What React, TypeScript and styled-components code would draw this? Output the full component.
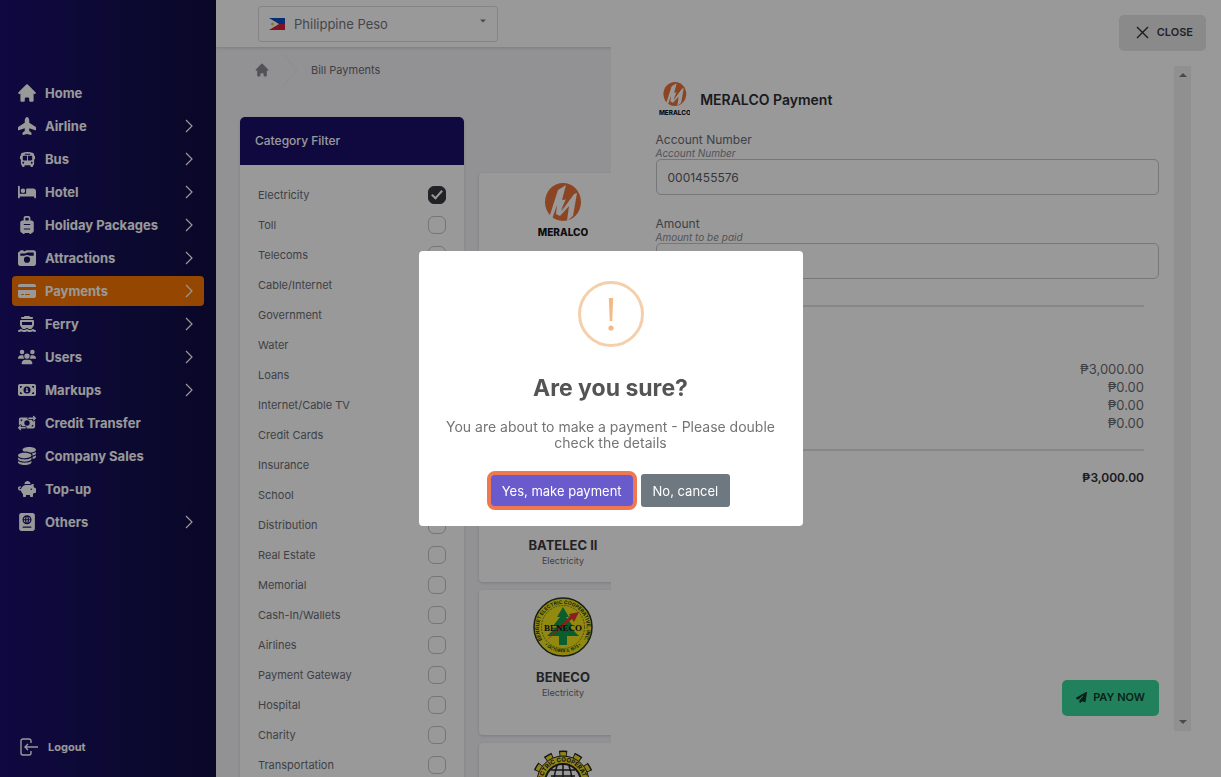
import React from "react";
import styled, { createGlobalStyle } from "styled-components";
import { HiHome } from "react-icons/hi";
import {
  FaPlaneUp, FaBus, FaBed, FaSuitcaseRolling, FaCameraRetro, FaCreditCard, FaFerry,
  FaUsers, FaMoneyBill1, FaMoneyBillTransfer, FaCoins, FaPiggyBank, FaPassport, FaPaperPlane,
} from "react-icons/fa6";

const Global = createGlobalStyle`
  *, *::before, *::after { box-sizing: border-box; }
  body { margin: 0; font-family: Inter, "Open Sans", sans-serif; font-size: 13px; color: #6a6c74; background: #f3f3f8; overflow: hidden; }
  button, input, select { font: inherit; }
  h1, h2, h3, p, ul, dl, dd { margin: 0; padding: 0; }
`;

const Page = styled.div`
  display: flex;
  height: 100vh;
  overflow: hidden;
`;

const Sidebar = styled.aside`
  flex: 0 0 216px;
  display: flex;
  flex-direction: column;
  justify-content: space-between;
  padding: 78px 12px 15px;
  background: linear-gradient(90deg, #1b0e6e 0%, #151054 55%, #110d42 100%);
`;

const Menu = styled.ul`
  display: flex;
  flex-direction: column;
  gap: 3px;
  list-style: none;
`;

const MenuLink = styled.a<{ $active?: boolean }>`
  display: flex;
  align-items: center;
  gap: 9px;
  height: 30px;
  padding: 0 11px 0 6px;
  border-radius: 4px;
  font-weight: 700;
  color: #fff;
  text-decoration: none;
  background: ${(p) => (p.$active ? "#f97500" : "transparent")};
  & > span { flex: 1; }
`;

const MenuIcon = styled.i`
  display: flex;
  justify-content: center;
  width: 18px;
  & > svg { flex: none; }
`;

const LogoutLink = styled.a`
  display: flex;
  align-items: center;
  gap: 10px;
  height: 30px;
  padding-left: 8px;
  font-size: 11px;
  font-weight: 700;
  color: #fff;
  text-decoration: none;
`;

const Main = styled.main`
  flex: 1;
  min-width: 0;
`;

const Topbar = styled.header`
  height: 47px;
  padding: 6px 42px;
  background: #fff;
  box-shadow: 0 1px 3px rgba(0, 0, 0, 0.15);
`;

const CurrencyBox = styled.div`
  display: flex;
  align-items: center;
  gap: 9px;
  width: 240px;
  height: 36px;
  padding: 0 10px;
  border: 1px solid #dcdce2;
  border-radius: 3px;
`;

const CurrencySelect = styled.select`
  flex: 1;
  appearance: none;
  padding: 0;
  border: 0;
  background: transparent;
  color: #74767f;
`;

const SelectCaret = styled.span`
  display: flex;
  margin: 0 1px 6px 0;
`;

const Crumbs = styled.nav`
  display: flex;
  align-items: center;
  height: 46px;
  padding-left: 38px;
  font-size: 11px;
  & > a { display: flex; color: #8a8a92; font-size: 16px; }
  & > svg { margin: 0 13px; }
`;

const Columns = styled.div`
  display: flex;
  align-items: flex-start;
  gap: 15px;
  padding: 24px 24px 0;
`;

const FilterCard = styled.section`
  flex: 0 0 224px;
  border-radius: 5px;
  background: #fff;
  box-shadow: 0 1px 3px rgba(0, 0, 0, 0.12);
  overflow: hidden;
`;

const FilterTitle = styled.h2`
  height: 48px;
  padding: 0 15px;
  font-size: 12px;
  font-weight: 500;
  line-height: 48px;
  color: #fff;
  background: #190f6c;
`;

const FilterList = styled.div`
  padding: 15px 18px;
`;

const FilterRow = styled.label`
  display: flex;
  align-items: center;
  justify-content: space-between;
  height: 30px;
  font-size: 11px;
`;

const Check = styled.input`
  appearance: none;
  display: grid;
  place-items: center;
  width: 18px;
  height: 18px;
  margin: 0;
  border: 1px solid #c4c4ca;
  border-radius: 6px;
  &:checked { background: #3a3a40; border-color: #3a3a40; }
  &:checked::after {
    content: "";
    width: 6px;
    height: 11px;
    margin-bottom: 3px;
    border: solid #fff;
    border-width: 0 2px 2px 0;
    transform: rotate(42deg);
  }
`;

const Billers = styled.div`
  flex: 1;
  display: flex;
  flex-direction: column;
  gap: 8px;
  max-width: 168px;
  padding-top: 56px;
`;

const BillerCard = styled.article<{ $tall?: boolean }>`
  display: flex;
  flex-direction: column;
  align-items: center;
  min-height: ${(p) => (p.$tall ? "145px" : "124px")};
  padding: 7px 0 14px;
  border-radius: 4px;
  background: #fff;
  box-shadow: 0 1px 3px rgba(0, 0, 0, 0.15);
  & > svg { flex: none; }
`;

const BillerName = styled.h3`
  margin-top: 11px;
  font-size: 13px;
  line-height: 18px;
  color: #3a3a40;
`;

const BillerKind = styled.p`
  font-size: 9px;
  line-height: 14px;
`;

const Drawer = styled.section`
  position: fixed;
  inset: 0 0 0 50%;
  display: flex;
  flex-direction: column;
  padding: 15px 15px 46px 45px;
  background: #fff;
`;

const CloseButton = styled.button`
  align-self: flex-end;
  display: flex;
  align-items: center;
  gap: 8px;
  height: 36px;
  padding: 0 13px 2px 17px;
  border: 0;
  border-radius: 5px;
  font-size: 11px;
  font-weight: 600;
  color: #3a3a40;
  background: #e6e6e6;
`;

const DrawerBody = styled.div`
  flex: 1;
  display: flex;
  gap: 15px;
  margin: 15px 15px 0 0;
`;

const Form = styled.form`
  flex: 1;
  display: flex;
  flex-direction: column;
  padding: 15px 0;
`;

const FormHead = styled.div`
  display: flex;
  align-items: center;
  gap: 10px;
  height: 36px;
  margin-bottom: 15px;
  padding-left: 3px;
  & > h2 { font-size: 14px; font-weight: 600; color: #2e2e34; }
`;

const Field = styled.label`
  display: flex;
  flex-direction: column;
  margin-bottom: 21px;
  font-size: 12px;
  line-height: 16px;
  & > em { font-size: 10px; line-height: 11px; color: #8a8a92; }
`;

const TextInput = styled.input`
  width: 100%;
  height: 36px;
  padding: 0 11px;
  border: 1px solid #c4c6cc;
  border-radius: 5px;
  background: transparent;
  font-size: 12px;
  color: #5a5c66;
`;

const Rule = styled.hr`
  width: calc(100% - 15px);
  margin: 5px 15px 0 0;
  border: 0;
  border-top: 2px solid #e2e2e2;
`;

const Amounts = styled.dl`
  margin: 53px 15px 12px 0;
  text-align: right;
  line-height: 18px;
`;

const Total = styled.p`
  margin: 18px 15px 0 0;
  text-align: right;
  font-weight: 600;
  line-height: 18px;
  font-size: 12px;
  color: #2e2e34;
`;

const PayButton = styled.button`
  align-self: flex-end;
  display: flex;
  align-items: center;
  gap: 6px;
  height: 36px;
  margin-top: auto;
  padding: 0 14px 2px;
  border: 0;
  border-radius: 5px;
  font-size: 11px;
  font-weight: 600;
  color: #12382c;
  background: #38d79a;
`;

const ScrollTrack = styled.div`
  display: flex;
  flex-direction: column;
  align-items: center;
  justify-content: space-between;
  width: 17px;
  padding: 7px 0;
  background: #f1f1f1;
`;

const Overlay = styled.div`
  position: fixed;
  inset: 0;
  display: flex;
  align-items: center;
  justify-content: center;
  background: rgba(0, 0, 0, 0.4);
`;

const Dialog = styled.div`
  display: flex;
  flex-direction: column;
  align-items: center;
  width: 384px;
  padding: 30px 15px 16px;
  border-radius: 4px;
  text-align: center;
  background: #fff;
`;

const DialogTitle = styled.h1`
  margin-top: 24px;
  font-size: 23px;
  line-height: 34px;
  color: #545454;
`;

const DialogText = styled.p`
  margin-top: 14px;
  font-size: 14px;
  line-height: 16px;
  color: #747474;
`;

const DialogActions = styled.div`
  display: flex;
  align-items: center;
  gap: 4px;
  margin-top: 20px;
  padding-right: 4px;
`;

const DialogButton = styled.button<{ $primary?: boolean }>`
  height: ${(p) => (p.$primary ? "39px" : "33px")};
  padding: 0 ${(p) => (p.$primary ? "11px" : "12px")};
  border: ${(p) => (p.$primary ? "4px solid #ef7850" : "0")};
  border-radius: ${(p) => (p.$primary ? "8px" : "3px")};
  color: #fff;
  background: ${(p) => (p.$primary ? "#6a5bcd" : "#6e7881")};
`;

const Meralco = ({ height }: { height: number }) => (
  <svg height={height} viewBox="0 0 50 60" role="img" aria-label="Meralco">
    <ellipse cx="25" cy="22" rx="18" ry="19" fill="#e8743b" />
    <path d="M11 38 20 10l8-5-4 15 4-1-5 11 13-16 3-1-4 23-6 5 2-15-9 10-4-2 1-9-5 14z" fill="#fff" />
    <path d="M29 4l-4 16 4-1-6 13 13-18-5 1 4-9z" fill="#e8743b" />
    <text x="25" y="56" textAnchor="middle" fontFamily="Inter" fontSize="10" fontWeight="800" fill="#17171c">MERALCO</text>
  </svg>
);

const Batelec = () => (
  <svg width="80" height="81" viewBox="0 0 80 81" role="img" aria-label="Batelec II">
    <circle cx="40" cy="40" r="36" fill="#f0dc28" stroke="#222" strokeWidth="2" />
    <path d="M44 14 24 44h14l-4 24 22-32H42z" fill="#d8342c" />
  </svg>
);

const Beneco = () => (
  <svg width="60" height="60" viewBox="0 0 60 60" role="img" aria-label="Beneco">
    <defs>
      <path id="ring-top" d="M9.500 43.500a24 24 0 1 1 41 0" />
      <path id="ring-low" d="M12 48a26 26 0 0 0 36 0" />
    </defs>
    <circle cx="30" cy="30" r="29" fill="#f4e61c" stroke="#26351f" strokeWidth="1.500" />
    <circle cx="30" cy="30" r="21.500" fill="none" stroke="#4b5a20" strokeWidth=".7" strokeDasharray="2 1" />
    <path d="M30 10 36 20h-3l7 9h-4l10 10H34v9h-8v-9H14l10-10h-4l7-9h-3z" fill="#149c4d" />
    <path d="M14 43 37 19l-1-2 10-2-5 10-2-3z" fill="#e5362f" />
    <text x="30" y="34" textAnchor="middle" fontFamily="Liberation Serif" fontSize="9" fontWeight="700" fill="#111">BENECO</text>
    <text fontFamily="Inter" fontSize="5" fontWeight="700" fill="#26351f"><textPath href="#ring-top" startOffset="50%" textAnchor="middle">BENGUET ELECTRIC COOPERATIVE, INC.</textPath></text>
    <text fontFamily="Inter" fontSize="4" fontWeight="700" fill="#26351f"><textPath href="#ring-low" startOffset="50%" textAnchor="middle">• OCTOBER 5, 1973 •</textPath></text>
  </svg>
);

const GearSeal = () => (
  <svg width="64" height="64" viewBox="0 0 64 64" role="img" aria-label="Electric cooperative">
    <defs><path id="gear-ring" d="M14 42a20.500 20.500 0 1 1 36 0" /></defs>
    <circle cx="32" cy="32" r="28.500" fill="none" stroke="#222" strokeWidth="6" strokeDasharray="8 6.920" strokeDashoffset="4" transform="rotate(-90 32 32)" />
    <circle cx="32" cy="32" r="27.500" fill="none" stroke="#f0dc28" strokeWidth="5" strokeDasharray="6 8.400" strokeDashoffset="3" transform="rotate(-90 32 32)" />
    <circle cx="32" cy="32" r="26" fill="#f0dc28" stroke="#222" />
    <circle cx="32" cy="32" r="18" fill="#fff" stroke="#222" strokeWidth="2" />
    <path d="M14 32h36M32 14v36M20 20h24M20 26h24M26 16q-6 16 0 32M38 16q6 16 0 32" fill="none" stroke="#222" strokeWidth="1.500" />
    <text fontFamily="Inter" fontSize="6" fontWeight="700" fill="#222"><textPath href="#gear-ring" startOffset="50%" textAnchor="middle">ELECTRIC COOPERATIVE</textPath></text>
  </svg>
);

const Flag = () => (
  <svg width="16" height="12" viewBox="0 0 16 12" aria-hidden="true">
    <path fill="#0d4ec0" d="M0 0h16v6H0z" />
    <path fill="#d81e34" d="M0 6h16v6H0z" />
    <path fill="#fff" d="M0 0l10 6-10 6z" />
    <circle cx="3.500" cy="6" r="1.600" fill="#f4c430" />
  </svg>
);

const Caret = ({ up = false, width = 8 }: { up?: boolean; width?: number }) => (
  <svg width={width} height="4" viewBox="0 0 8 4" aria-hidden="true">
    <path d={up ? "M0 4 4 0l4 4z" : "M0 0h8L4 4z"} fill="#7c7c80" />
  </svg>
);

const Chevron = () => (
  <svg width="8" height="14" viewBox="0 0 8 14" fill="none" stroke="#fff" strokeWidth="1.200" aria-hidden="true">
    <path d="M1 1l6 6-6 6" />
  </svg>
);

const menu = [
  { label: "Home", icon: HiHome, size: 22 },
  { label: "Airline", icon: FaPlaneUp, more: true },
  { label: "Bus", icon: FaBus, more: true, size: 17 },
  { label: "Hotel", icon: FaBed, more: true },
  { label: "Holiday Packages", icon: FaSuitcaseRolling, more: true },
  { label: "Attractions", icon: FaCameraRetro, more: true },
  { label: "Payments", icon: FaCreditCard, more: true, active: true },
  { label: "Ferry", icon: FaFerry, more: true },
  { label: "Users", icon: FaUsers, more: true },
  { label: "Markups", icon: FaMoneyBill1, more: true },
  { label: "Credit Transfer", icon: FaMoneyBillTransfer },
  { label: "Company Sales", icon: FaCoins },
  { label: "Top-up", icon: FaPiggyBank },
  { label: "Others", icon: FaPassport, more: true },
];

const categories = [
  "Electricity", "Toll", "Telecoms", "Cable/Internet", "Government", "Water", "Loans",
  "Internet/Cable TV", "Credit Cards", "Insurance", "School", "Distribution", "Real Estate",
  "Memorial", "Cash-In/Wallets", "Airlines", "Payment Gateway", "Hospital", "Charity", "Transportation",
];

export default function App() {
  return (
    <>
      <Global />
      <Page>
        <Sidebar>
          <Menu>
            {menu.map(({ label, icon: Icon, more, active, size }) => (
              <li key={label}>
                <MenuLink href="#" $active={active}>
                  <MenuIcon><Icon size={size ?? 18} /></MenuIcon>
                  <span>{label}</span>
                  {more && <Chevron />}
                </MenuLink>
              </li>
            ))}
          </Menu>
          <LogoutLink href="#">
            <svg width="18" height="18" viewBox="0 0 18 18" fill="none" stroke="#fff" strokeWidth="1.400" aria-hidden="true">
              <path d="M11 5V3a2 2 0 0 0-2-2H3a2 2 0 0 0-2 2v12a2 2 0 0 0 2 2h6a2 2 0 0 0 2-2v-2M18 9H5M8 6 5 9l3 3" />
            </svg>
            Logout
          </LogoutLink>
        </Sidebar>

        <Main>
          <Topbar>
            <CurrencyBox>
              <Flag />
              <CurrencySelect aria-label="Currency"><option>Philippine Peso</option></CurrencySelect>
              <SelectCaret><Caret width={6} /></SelectCaret>
            </CurrencyBox>
          </Topbar>
          <Crumbs aria-label="Breadcrumb">
            <a href="#" aria-label="Home"><HiHome /></a>
            <svg width="15" height="32" viewBox="0 0 15 32" fill="none" stroke="#ebebf0" aria-hidden="true"><path d="M0 0l14 16L0 32" /></svg>
            <span>Bill Payments</span>
          </Crumbs>
          <Columns>
            <FilterCard>
              <FilterTitle>Category Filter</FilterTitle>
              <FilterList>
                {categories.map((c, i) => (
                  <FilterRow key={c}>
                    {c}
                    <Check type="checkbox" defaultChecked={i === 0} />
                  </FilterRow>
                ))}
              </FilterList>
            </FilterCard>
            <Billers>
              <BillerCard>
                <Meralco height={60} />
              </BillerCard>
              <BillerCard />
              <BillerCard $tall>
                <Batelec />
                <BillerName>BATELEC II</BillerName>
                <BillerKind>Electricity</BillerKind>
              </BillerCard>
              <BillerCard $tall>
                <Beneco />
                <BillerName>BENECO</BillerName>
                <BillerKind>Electricity</BillerKind>
              </BillerCard>
              <BillerCard $tall>
                <GearSeal />
              </BillerCard>
            </Billers>
          </Columns>
        </Main>
      </Page>

      <Drawer aria-label="MERALCO Payment">
        <CloseButton type="button">
          <svg width="13" height="13" viewBox="0 0 13 13" stroke="#2e2e34" strokeWidth="1.400" aria-hidden="true"><path d="M1 1l11 11M12 1 1 12" /></svg>
          CLOSE
        </CloseButton>
        <DrawerBody>
          <Form>
            <FormHead>
              <Meralco height={38} />
              <h2>MERALCO Payment</h2>
            </FormHead>
            <Field>
              Account Number
              <em>Account Number</em>
              <TextInput defaultValue="0001455576" />
            </Field>
            <Field>
              Amount
              <em>Amount to be paid</em>
              <TextInput />
            </Field>
            <Rule />
            <Amounts>
              <dd>₱3,000.00</dd>
              <dd>₱0.00</dd>
              <dd>₱0.00</dd>
              <dd>₱0.00</dd>
            </Amounts>
            <Rule />
            <Total>₱3,000.00</Total>
            <PayButton type="button"><FaPaperPlane />PAY NOW</PayButton>
          </Form>
          <ScrollTrack><Caret up /><Caret /></ScrollTrack>
        </DrawerBody>
      </Drawer>

      <Overlay>
        <Dialog role="dialog" aria-modal="true" aria-labelledby="confirm-title">
          <svg width="66" height="66" viewBox="0 0 66 66" fill="none" aria-hidden="true">
            <circle cx="33" cy="33" r="31.500" stroke="#f5cfa9" strokeWidth="3" />
            <path d="M30.800 17h4.400l-1 23h-2.400z" fill="#f3b987" />
            <circle cx="33" cy="47" r="2.600" fill="#f3b987" />
          </svg>
          <DialogTitle id="confirm-title">Are you sure?</DialogTitle>
          <DialogText>You are about to make a payment - Please double check the details</DialogText>
          <DialogActions>
            <DialogButton type="button" $primary>Yes, make payment</DialogButton>
            <DialogButton type="button">No, cancel</DialogButton>
          </DialogActions>
        </Dialog>
      </Overlay>
    </>
  );
}
